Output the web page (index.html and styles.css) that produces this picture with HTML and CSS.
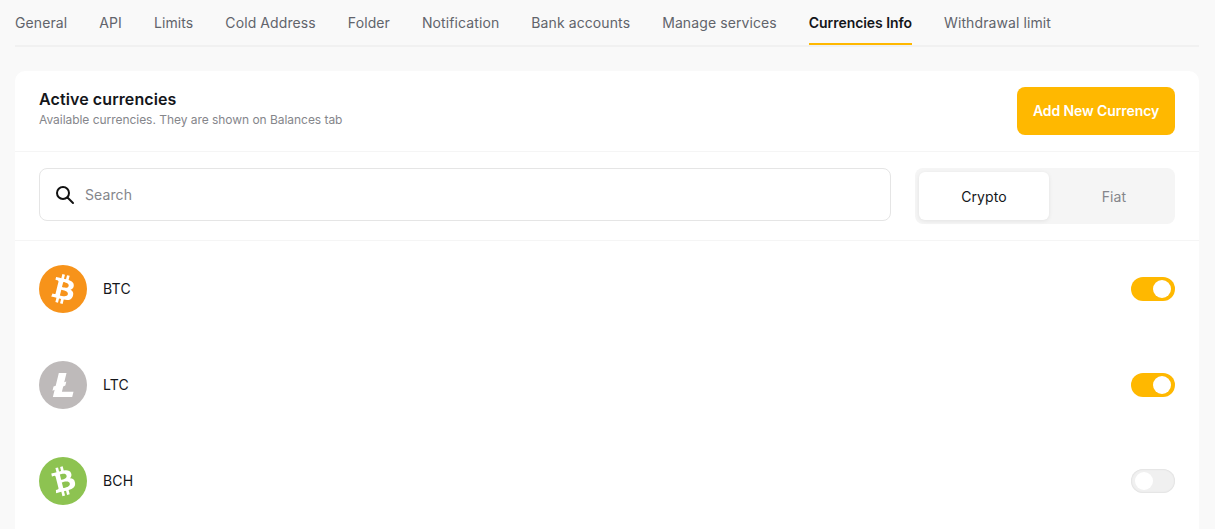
FILE: index.html
```html
<!DOCTYPE html>
<html lang="en">
<head>
<meta charset="utf-8">
<title>Currencies Info</title>
<link rel="stylesheet" href="styles.css">
</head>
<body>
<div class="page">
  <nav class="tabs">
    <a class="tab">General</a>
    <a class="tab">API</a>
    <a class="tab">Limits</a>
    <a class="tab">Cold Address</a>
    <a class="tab">Folder</a>
    <a class="tab">Notification</a>
    <a class="tab">Bank accounts</a>
    <a class="tab">Manage services</a>
    <a class="tab active">Currencies Info</a>
    <a class="tab">Withdrawal limit</a>
  </nav>
  <section class="card">
    <header class="card-head">
      <div class="head-text">
        <h1 class="title">Active currencies</h1>
        <p class="subtitle">Available currencies. They are shown on Balances tab</p>
      </div>
      <button class="add-btn">Add New Currency</button>
    </header>
    <div class="filters">
      <label class="search">
        <svg class="search-icon" viewBox="0 0 24 24" width="24" height="24" fill="none" stroke="#111" stroke-width="2"><circle cx="10" cy="10" r="6"/><path d="M14.5 14.5 20 20" stroke-linecap="round"/></svg>
        <span class="placeholder">Search</span>
      </label>
      <div class="segmented">
        <button class="seg active">Crypto</button>
        <button class="seg">Fiat</button>
      </div>
    </div>
    <ul class="list">
      <li class="row">
        <svg class="coin" viewBox="0 0 32 32"><circle cx="16" cy="16" r="16" fill="#f7931a"/><path fill="#fff" d="M23.189 14.02c.314-2.096-1.283-3.223-3.465-3.975l.708-2.84-1.728-.43-.69 2.765c-.454-.114-.92-.22-1.385-.326l.695-2.783L15.596 6l-.708 2.839c-.376-.086-.746-.17-1.104-.26l.002-.009-2.384-.595-.46 1.846s1.283.294 1.256.312c.7.175.826.638.805 1.006l-.806 3.235c.048.012.11.03.18.057l-.183-.045-1.13 4.532c-.086.212-.303.531-.793.41.018.025-1.256-.313-1.256-.313l-.858 1.978 2.25.561c.418.105.828.215 1.231.318l-.715 2.872 1.727.43.708-2.84c.472.127.93.245 1.378.357l-.706 2.828 1.728.43.715-2.866c2.948.558 5.164.333 6.097-2.333.752-2.146-.037-3.385-1.588-4.192 1.13-.26 1.98-1.003 2.207-2.538zm-3.95 5.538c-.533 2.147-4.148.986-5.32.695l.95-3.805c1.172.293 4.929.872 4.37 3.11zm.535-5.569c-.487 1.953-3.495.96-4.47.717l.86-3.45c.975.243 4.118.696 3.61 2.733z"/></svg>
        <span class="code">BTC</span>
        <span class="switch on"><span class="knob"></span></span>
      </li>
      <li class="row">
        <svg class="coin" viewBox="0 0 32 32"><circle cx="16" cy="16" r="16" fill="#bebaba"/><path fill="#fff" d="M10.427 19.214L9 19.768l.688-2.759 1.444-.58L13.213 8h5.129l-1.519 6.196 1.41-.571-.68 2.75-1.427.571-.848 3.483H23L22.127 24H9.252z"/></svg>
        <span class="code">LTC</span>
        <span class="switch on"><span class="knob"></span></span>
      </li>
      <li class="row">
        <svg class="coin" viewBox="0 0 32 32"><circle cx="16" cy="16" r="16" fill="#8dc351"/><path fill="#fff" transform="rotate(-28 16 16)" d="M23.189 14.02c.314-2.096-1.283-3.223-3.465-3.975l.708-2.84-1.728-.43-.69 2.765c-.454-.114-.92-.22-1.385-.326l.695-2.783L15.596 6l-.708 2.839c-.376-.086-.746-.17-1.104-.26l.002-.009-2.384-.595-.46 1.846s1.283.294 1.256.312c.7.175.826.638.805 1.006l-.806 3.235c.048.012.11.03.18.057l-.183-.045-1.13 4.532c-.086.212-.303.531-.793.41.018.025-1.256-.313-1.256-.313l-.858 1.978 2.25.561c.418.105.828.215 1.231.318l-.715 2.872 1.727.43.708-2.84c.472.127.93.245 1.378.357l-.706 2.828 1.728.43.715-2.866c2.948.558 5.164.333 6.097-2.333.752-2.146-.037-3.385-1.588-4.192 1.13-.26 1.98-1.003 2.207-2.538zm-3.95 5.538c-.533 2.147-4.148.986-5.32.695l.95-3.805c1.172.293 4.929.872 4.37 3.11zm.535-5.569c-.487 1.953-3.495.96-4.47.717l.86-3.45c.975.243 4.118.696 3.61 2.733z"/></svg>
        <span class="code">BCH</span>
        <span class="switch"><span class="knob"></span></span>
      </li>
    </ul>
  </section>
</div>
</body>
</html>
```
FILE: styles.css
```css
* { box-sizing: border-box; }
html, body { margin: 0; height: 100%; overflow: hidden; }
body {
  background: #f9f9f9;
  font-family: "Inter", "Liberation Sans", sans-serif;
  color: #14161a;
}
.page { padding: 0 16px 0 15px; }
.tabs {
  display: flex;
  gap: 32px;
  height: 47px;
  border-bottom: 2px solid #f1f1f1;
}
.tab {
  height: 45px;
  line-height: 46px;
  font-size: 14px;
  letter-spacing: 0.1px;
  color: #61646b;
  white-space: nowrap;
}
.tab.active {
  color: #14161a;
  font-weight: 600;
  letter-spacing: -0.06px;
  border-bottom: 2px solid #ffb800;
}
.card {
  margin-top: 24px;
  background: #fff;
  border-radius: 10px 10px 0 0;
  height: 470px;
}
.card-head {
  display: flex;
  justify-content: space-between;
  align-items: center;
  height: 81px;
  padding: 0 24px;
  border-bottom: 1px solid #f5f5f5;
}
.head-text { margin-bottom: 6px; }
.title {
  margin: 0;
  font-size: 16px;
  line-height: 20px;
  font-weight: 600;
  letter-spacing: 0.1px;
  color: #14161a;
}
.subtitle {
  margin: 3px 0 0;
  font-size: 12px;
  line-height: 16px;
  letter-spacing: -0.04px;
  color: #85868b;
}
.add-btn {
  width: 158px;
  height: 48px;
  padding: 0 0 2px;
  border: 0;
  border-radius: 8px;
  background: #ffb800;
  color: #fff;
  font: 600 14px "Inter", sans-serif;
  letter-spacing: -0.1px;
}
.filters {
  display: flex;
  justify-content: space-between;
  height: 89px;
  padding: 16px 24px;
  border-bottom: 1px solid #f5f5f5;
}
.search {
  display: flex;
  align-items: center;
  width: 852px;
  height: 53px;
  padding-left: 13px;
  gap: 8px;
  border: 1px solid #e5e5e5;
  border-radius: 8px;
}
.placeholder { font-size: 14px; color: #85868b; letter-spacing: 0.1px; }
.segmented {
  display: flex;
  width: 260px;
  height: 56px;
  padding: 4px;
  border-radius: 8px;
  background: #f5f5f5;
}
.seg {
  width: 130px;
  height: 48px;
  border: 0;
  border-radius: 6px;
  background: transparent;
  font: 400 14px "Inter", sans-serif;
  letter-spacing: 0.1px;
  color: #85868b;
}
.seg + .seg { width: 122px; padding: 0 0 0 8px; }
.seg.active {
  background: #fff;
  color: #14161a;
  box-shadow: 0 1px 4px rgba(0, 0, 0, .08);
}
.list { margin: 0; padding: 0; list-style: none; }
.row {
  display: flex;
  align-items: center;
  height: 96px;
  padding: 0 24px;
}
.coin { width: 48px; height: 48px; flex: none; }
.code { margin: 0 0 2px 16px; font-size: 14px; letter-spacing: 0.2px; color: #14161a; }
.switch {
  display: flex;
  align-items: center;
  margin-left: auto;
  width: 44px;
  height: 24px;
  padding: 0 4px;
  border-radius: 12px;
  background: #f0f0f0;
  box-shadow: inset 0 0 2px rgba(0, 0, 0, .15);
}
.switch.on { justify-content: flex-end; background: #ffb800; box-shadow: none; }
.knob { width: 18px; height: 18px; border-radius: 50%; background: #fff; }
```
